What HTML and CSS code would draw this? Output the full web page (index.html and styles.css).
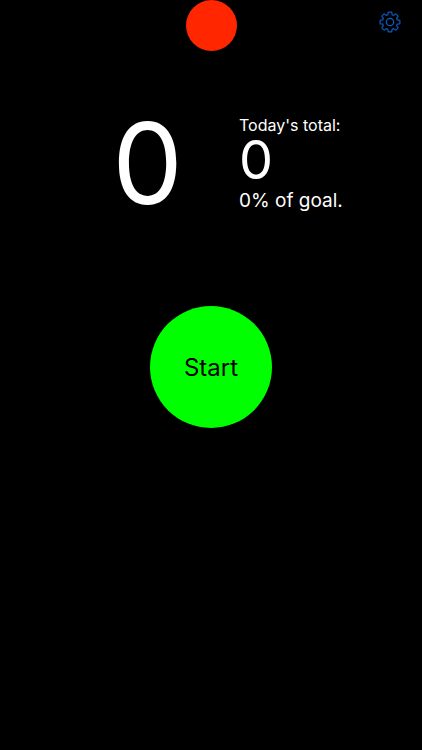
FILE: index.html
```html
<!DOCTYPE html>
<html lang="en">
<head>
<meta charset="utf-8">
<meta name="viewport" content="width=device-width, initial-scale=1">
<title>Counter</title>
<link rel="stylesheet" href="styles.css">
</head>
<body>
<header class="top">
  <div class="indicator"></div>
  <button class="settings" type="button" aria-label="Settings">
    <svg viewBox="-12 -12 24 24" width="24" height="24" fill="none" stroke="currentColor" stroke-width="1.2" stroke-linejoin="round">
      <path d="M-1.2-9.9H1.2Q1.8-9.9 1.9-9.2L2.1-7.3L3.7-6.6L5.2-7.9Q5.7-8.3 6.2-7.9L7.9-6.2Q8.3-5.7 7.9-5.2L6.6-3.7L7.3-2.1L9.2-1.9Q9.9-1.8 9.9-1.2V1.2Q9.9 1.8 9.2 1.9L7.3 2.1L6.6 3.7L7.9 5.2Q8.3 5.7 7.9 6.2L6.2 7.9Q5.7 8.3 5.2 7.9L3.7 6.6L2.1 7.3L1.9 9.2Q1.8 9.9 1.2 9.9H-1.2Q-1.8 9.9-1.9 9.2L-2.1 7.3L-3.7 6.6L-5.2 7.9Q-5.7 8.3-6.2 7.9L-7.9 6.2Q-8.3 5.7-7.9 5.2L-6.6 3.7L-7.3 2.1L-9.2 1.9Q-9.9 1.8-9.9 1.2V-1.2Q-9.9-1.8-9.2-1.9L-7.3-2.1L-6.6-3.7L-7.9-5.2Q-8.3-5.7-7.9-6.2L-6.2-7.9Q-5.7-8.3-5.2-7.9L-3.7-6.6L-2.1-7.3L-1.9-9.2Q-1.8-9.9-1.2-9.9Z"/>
      <circle r="3.7"/>
    </svg>
  </button>
</header>
<main class="content">
  <section class="stats">
    <div class="count">0</div>
    <div class="today">
      <p class="label">Today's total:</p>
      <p class="total">0</p>
      <p class="goal">0% of goal.</p>
    </div>
  </section>
  <button class="start" type="button">Start</button>
</main>
</body>
</html>
```
FILE: styles.css
```css
* { box-sizing: border-box; }
body {
  margin: 0;
  min-height: 100vh;
  background: #000;
  color: #fff;
  font-family: Inter, "Liberation Sans", sans-serif;
}
p { margin: 0; }
.top {
  display: grid;
  grid-template-columns: 1fr auto 1fr;
  padding: 0 20px;
}
.indicator {
  grid-column: 2;
  width: 51px;
  height: 51px;
  border-radius: 50%;
  background: #ff2600;
}
.settings {
  justify-self: end;
  align-self: start;
  margin-top: 10px;
  padding: 0;
  border: 0;
  background: none;
  color: #0a5bc4;
  line-height: 0;
}
.content {
  display: flex;
  flex-direction: column;
  align-items: center;
}
.stats {
  display: grid;
  grid-template-columns: 1fr 1fr;
  column-gap: 56px;
  width: 100%;
  padding-top: 64px;
}
.count {
  justify-self: end;
  font-size: 112px;
  line-height: 96px;
}
.label { font-size: 16px; line-height: 20px; }
.total { font-size: 54px; line-height: 50px; }
.goal { padding-top: 4px; font-size: 19px; line-height: 24px; }
.start {
  width: 122px;
  height: 122px;
  margin-top: 93px;
  padding: 0;
  border: 0;
  border-radius: 50%;
  background: #00ff00;
  color: #000;
  font: 24px Inter, "Liberation Sans", sans-serif;
}
```
